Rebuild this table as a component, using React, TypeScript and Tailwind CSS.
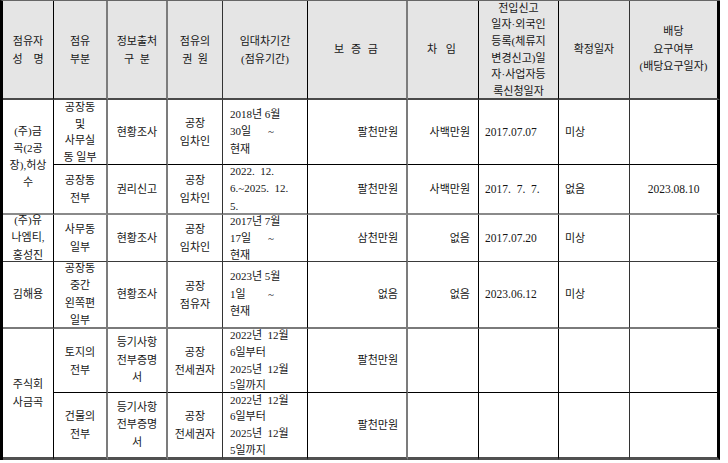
import React from 'react';

// column right borders (outer right edge is the thick one)
const colR = [
  'border-r border-r-black',
  'border-r-2 border-r-[#7c7c7c]',
  'border-r-2 border-r-[#7c7c7c]',
  'border-r border-r-[#333]',
  'border-r border-r-black',
  'border-r-2 border-r-[#7c7c7c]',
  'border-r border-r-black',
  'border-r border-r-black',
  'border-r border-r-[#333]',
  'border-r-[3px] border-r-black',
];

// row bottom borders
const rowB = {
  h: 'border-b-2 border-b-[#4a4a4a]',
  r1: 'border-b border-b-black',
  r2: 'border-b-2 border-b-[#8a8a8a]',
  r3: 'border-b border-b-[#3a3a3a]',
  r4: 'border-b-2 border-b-[#7a7a7a]',
  r5: 'border-b border-b-black',
  r6: 'border-b-[3px] border-b-[#505050]',
};

type Align = 'center' | 'left' | 'right' | 'date';

const alignCls: Record<Align, string> = {
  center: 'justify-center text-center',
  left: 'justify-start text-left pl-[6px]',
  right: 'justify-end text-right pr-2',
  date: 'justify-start text-left pl-[7px]',
};

interface CellProps {
  col: number;
  row: keyof typeof rowB;
  align?: Align;
  span?: boolean;
  head?: boolean;
  lead?: string;
  children?: React.ReactNode;
}

const Cell: React.FC<CellProps> = ({ col, row, align = 'center', span, head, lead = 'leading-[17px]', children }) => (
  <div
    className={`flex items-center overflow-visible ${colR[col]} ${rowB[row]} ${alignCls[align]} ${lead} ${
      span ? 'row-span-2' : ''
    } ${head ? 'bg-[#e5e5e5]' : 'bg-white'}`}
  >
    <div>{children}</div>
  </div>
);

const Lines: React.FC<{ items: string[] }> = ({ items }) => (
  <>
    {items.map((t, i) => (
      <div key={i} className="whitespace-pre">
        {t}
      </div>
    ))}
  </>
);

// "30일 ~" style line, tilde pushed right
const Tilde: React.FC<{ day: string }> = ({ day }) => (
  <div className="flex w-[44px] justify-between">
    <span>{day}</span>
    <span>~</span>
  </div>
);

const Period: React.FC<{ first: string; day: string }> = ({ first, day }) => (
  <>
    <div>{first}</div>
    <Tilde day={day} />
    <div>현재</div>
  </>
);

const App: React.FC = () => {
  return (
    <div className="w-[728px] h-[463px] bg-white text-[11px] text-[#161616] font-['Liberation_Serif','Noto_Sans_CJK_KR',serif]">
      <div className="grid w-[720px] grid-cols-[51px_54px_60px_55px_85px_100px_71px_80px_71px_90px] grid-rows-[99px_65px_50px_47px_67px_64px_67px] border-l-[3px] border-l-black border-t border-t-[#666]">
        {/* Header */}
        <Cell col={0} row="h" head lead="leading-[18px]"><Lines items={['점유자', '성　명']} /></Cell>
        <Cell col={1} row="h" head lead="leading-[18px]"><Lines items={['점유', '부분']} /></Cell>
        <Cell col={2} row="h" head lead="leading-[18px]"><Lines items={['정보출처', '구  분']} /></Cell>
        <Cell col={3} row="h" head lead="leading-[18px]"><Lines items={['점유의', '권  원']} /></Cell>
        <Cell col={4} row="h" head lead="leading-[18px]"><Lines items={['임대차기간', '(점유기간)']} /></Cell>
        <Cell col={5} row="h" head><span className="tracking-[2px]">보 증 금</span></Cell>
        <Cell col={6} row="h" head><span className="tracking-[3px]">차 임</span></Cell>
        <Cell col={7} row="h" head lead="leading-[16.6px]">
          <Lines items={['전입신고', '일자·외국인', '등록(체류지', '변경신고)일', '자·사업자등', '록신청일자']} />
        </Cell>
        <Cell col={8} row="h" head>확정일자</Cell>
        <Cell col={9} row="h" head lead="leading-[17.5px]"><Lines items={['배당', '요구여부', '(배당요구일자)']} /></Cell>

        {/* Row 1 */}
        <Cell col={0} row="r2" span><Lines items={['(주)금', '곡(2공', '장),허상', '수']} /></Cell>
        <Cell col={1} row="r1" lead="leading-[16.5px]"><Lines items={['공장동', '및', '사무실', '동 일부']} /></Cell>
        <Cell col={2} row="r1">현황조사</Cell>
        <Cell col={3} row="r1" lead="leading-[18px]"><Lines items={['공장', '임차인']} /></Cell>
        <Cell col={4} row="r1" align="date" lead="leading-[17.5px]"><Period first="2018년 6월" day="30일" /></Cell>
        <Cell col={5} row="r1" align="right">팔천만원</Cell>
        <Cell col={6} row="r1" align="right">사백만원</Cell>
        <Cell col={7} row="r1" align="left"><span className="text-[11.5px]">2017.07.07</span></Cell>
        <Cell col={8} row="r1" align="left">미상</Cell>
        <Cell col={9} row="r1" />

        {/* Row 2 */}
        <Cell col={1} row="r2" lead="leading-[18px]"><Lines items={['공장동', '전부']} /></Cell>
        <Cell col={2} row="r2">권리신고</Cell>
        <Cell col={3} row="r2" lead="leading-[18px]"><Lines items={['공장', '임차인']} /></Cell>
        <Cell col={4} row="r2" align="date" lead="leading-[17.5px]">
          <Lines items={['2022.  12.', '6.~2025.  12.', '5.']} />
        </Cell>
        <Cell col={5} row="r2" align="right">팔천만원</Cell>
        <Cell col={6} row="r2" align="right">사백만원</Cell>
        <Cell col={7} row="r2" align="left"><span className="text-[11.5px] whitespace-pre">2017.  7.  7.</span></Cell>
        <Cell col={8} row="r2" align="left">없음</Cell>
        <Cell col={9} row="r2"><span className="text-[11.5px]">2023.08.10</span></Cell>

        {/* Row 3 */}
        <Cell col={0} row="r3" lead="leading-[17.5px]"><Lines items={['(주)유', '나엠티,', '홍성진']} /></Cell>
        <Cell col={1} row="r3" lead="leading-[18px]"><Lines items={['사무동', '일부']} /></Cell>
        <Cell col={2} row="r3">현황조사</Cell>
        <Cell col={3} row="r3" lead="leading-[18px]"><Lines items={['공장', '임차인']} /></Cell>
        <Cell col={4} row="r3" align="date" lead="leading-[17px]"><Period first="2017년 7월" day="17일" /></Cell>
        <Cell col={5} row="r3" align="right">삼천만원</Cell>
        <Cell col={6} row="r3" align="right">없음</Cell>
        <Cell col={7} row="r3" align="left"><span className="text-[11.5px]">2017.07.20</span></Cell>
        <Cell col={8} row="r3" align="left">미상</Cell>
        <Cell col={9} row="r3" />

        {/* Row 4 */}
        <Cell col={0} row="r4">김해용</Cell>
        <Cell col={1} row="r4" lead="leading-[17.3px]"><Lines items={['공장동', '중간', '왼쪽편', '일부']} /></Cell>
        <Cell col={2} row="r4">현황조사</Cell>
        <Cell col={3} row="r4" lead="leading-[18px]"><Lines items={['공장', '점유자']} /></Cell>
        <Cell col={4} row="r4" align="date" lead="leading-[17.5px]"><Period first="2023년 5월" day="1일" /></Cell>
        <Cell col={5} row="r4" align="right">없음</Cell>
        <Cell col={6} row="r4" align="right">없음</Cell>
        <Cell col={7} row="r4" align="left"><span className="text-[11.5px]">2023.06.12</span></Cell>
        <Cell col={8} row="r4" align="left">미상</Cell>
        <Cell col={9} row="r4" />

        {/* Row 5 */}
        <Cell col={0} row="r6" span lead="leading-[18px]"><Lines items={['주식회', '사금곡']} /></Cell>
        <Cell col={1} row="r5" lead="leading-[18px]"><Lines items={['토지의', '전부']} /></Cell>
        <Cell col={2} row="r5" lead="leading-[17.5px]"><Lines items={['등기사항', '전부증명', '서']} /></Cell>
        <Cell col={3} row="r5" lead="leading-[18px]"><Lines items={['공장', '전세권자']} /></Cell>
        <Cell col={4} row="r5" align="date" lead="leading-[16.6px]">
          <Lines items={['2022년  12월', '6일부터', '2025년  12월', '5일까지']} />
        </Cell>
        <Cell col={5} row="r5" align="right">팔천만원</Cell>
        <Cell col={6} row="r5" />
        <Cell col={7} row="r5" />
        <Cell col={8} row="r5" />
        <Cell col={9} row="r5" />

        {/* Row 6 */}
        <Cell col={1} row="r6" lead="leading-[18px]"><Lines items={['건물의', '전부']} /></Cell>
        <Cell col={2} row="r6" lead="leading-[17.5px]"><Lines items={['등기사항', '전부증명', '서']} /></Cell>
        <Cell col={3} row="r6" lead="leading-[18px]"><Lines items={['공장', '전세권자']} /></Cell>
        <Cell col={4} row="r6" align="date" lead="leading-[16.6px]">
          <Lines items={['2022년  12월', '6일부터', '2025년  12월', '5일까지']} />
        </Cell>
        <Cell col={5} row="r6" align="right">팔천만원</Cell>
        <Cell col={6} row="r6" />
        <Cell col={7} row="r6" />
        <Cell col={8} row="r6" />
        <Cell col={9} row="r6" />
      </div>
    </div>
  );
};

export default App;
